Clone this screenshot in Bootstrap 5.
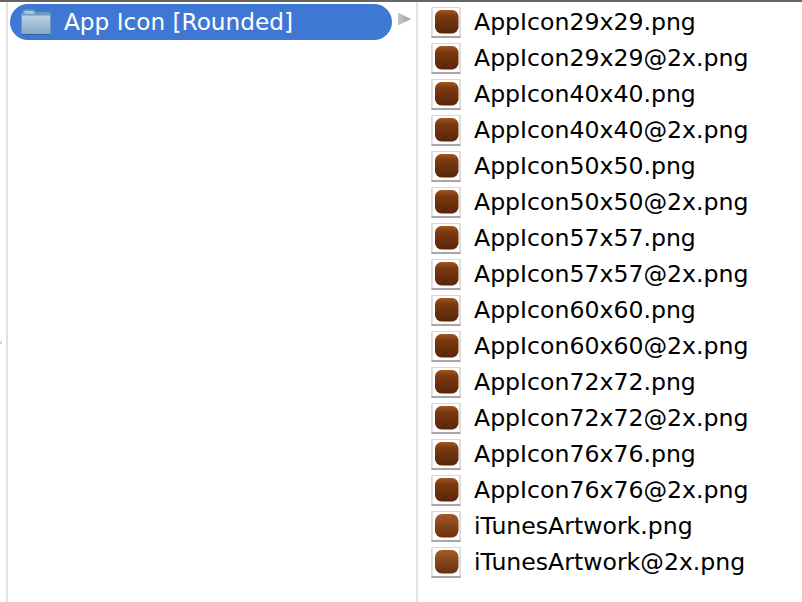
<!DOCTYPE html>
<html lang="en">
<head>
  <meta charset="UTF-8" />
  <title>App Icon [Rounded]</title>
  <link href="https://cdn.jsdelivr.net/npm/bootstrap@5.3.3/dist/css/bootstrap.min.css" rel="stylesheet" />
  <style>
    html, body { height: 100%; overflow: hidden; background: #fff; }
    .finder { height: 602px; border-top: 2px solid #666; font-family: "DejaVu Sans", sans-serif; font-size: 23.6px; line-height: 36px; color: #000; }
    .edge-strip { width: 8px; flex: none; border-right: 2px solid #e3e3e3; position: relative; }
    .edge-tick { position: absolute; left: 0; top: 339px; width: 2px; height: 3px; background: #d8d8d8; }
    .tree-pane { width: 410px; flex: none; border-right: 2px solid #e3e3e3; padding-top: 2px; }
    .folder-row { width: 382px; height: 36px; margin-left: 2px; background: #3f78d4; color: #fff; border-radius: 18px; padding-left: 10px; gap: 12px; font-size: 23.2px; flex: none; }
    .folder-row svg { flex: none; margin-top: 1px; }
    .disclose { width: 13px; height: 14px; margin: 8px 0 0 6px; flex: none; }
    .file-pane { padding: 3px 0 0 13px; }
    .file-row { height: 36px; gap: 12px; white-space: nowrap; }
    .file-row span { margin-top: -2px; }
    .thumb { width: 31px; height: 32px; flex: none; display: block; }
  </style>
</head>
<body>
  <svg width="0" height="0" class="position-absolute">
    <defs>
      <linearGradient id="iconFill" x1="0" y1="0" x2="0" y2="1">
        <stop offset="0" stop-color="#a5531f" />
        <stop offset="0.25" stop-color="#7a3a12" />
        <stop offset="1" stop-color="#5a2506" />
      </linearGradient>
      <linearGradient id="artFill" x1="0" y1="0" x2="0" y2="1">
        <stop offset="0" stop-color="#a45a2a" />
        <stop offset="0.5" stop-color="#85431a" />
        <stop offset="1" stop-color="#6a2f0c" />
      </linearGradient>
      <linearGradient id="folderFill" x1="0" y1="0" x2="0" y2="1">
        <stop offset="0" stop-color="#bcd2e2" />
        <stop offset="1" stop-color="#86aac4" />
      </linearGradient>
      <linearGradient id="arrowFill" x1="0" y1="0" x2="1" y2="0">
        <stop offset="0" stop-color="#c8c8c8" />
        <stop offset="1" stop-color="#9c9c9c" />
      </linearGradient>
      <symbol id="appThumb" viewBox="0 0 31 32">
        <rect x="0" y="0" width="30" height="31" fill="#ececec" />
        <rect x="0.5" y="0.5" width="29" height="30" fill="#c6c6c6" />
        <rect x="0.5" y="29" width="29" height="2" fill="#a8a8a8" />
        <rect x="1.5" y="1" width="27" height="28" fill="#fff" />
        <rect x="4" y="3" width="23.5" height="23.5" rx="6.5" fill="url(#iconFill)" />
      </symbol>
      <symbol id="artThumb" viewBox="0 0 31 32">
        <rect x="0" y="0" width="30" height="31" fill="#ececec" />
        <rect x="0.5" y="0.5" width="29" height="30" fill="#c6c6c6" />
        <rect x="0.5" y="29" width="29" height="2" fill="#a8a8a8" />
        <rect x="1.5" y="1" width="27" height="28" fill="#fff" />
        <rect x="4" y="3" width="23.5" height="23.5" rx="7" fill="url(#artFill)" />
      </symbol>
    </defs>
  </svg>

  <div class="finder d-flex">
    <div class="edge-strip"><div class="edge-tick"></div></div>
    <div class="tree-pane d-flex align-items-start">
      <div class="folder-row d-flex align-items-center">
        <svg width="32" height="27" viewBox="0 0 32 27">
          <path d="M3 2 Q3 0.5 5 0.5 H13 Q15 0.5 16 3 H29 Q31 3 31 5 V24 Q31 26 29 26 H3 Q1 26 1 24 V6 Q1 3 3 3 Z" fill="#6f9abb" />
          <path d="M4 2 H13 L15 5 H5 Z" fill="#a9c4d8" />
          <path d="M2 6.5 H30 V24 Q30 25 29 25 H3 Q2 25 2 24 Z" fill="url(#folderFill)" />
          <path d="M2 25 H30 V25.5 Q30 26 29 26 H3 Q2 26 2 25.5 Z" fill="#345f9e" />
        </svg>
        <span>App Icon [Rounded]</span>
      </div>
      <svg class="disclose" viewBox="0 0 13 14"><path d="M0 0.5 L13 7 L0 13.5 Z" fill="url(#arrowFill)" /></svg>
    </div>
    <div class="file-pane flex-grow-1" id="files"></div>
  </div>

  <script>
    const sizes = ["29x29", "40x40", "50x50", "57x57", "60x60", "72x72", "76x76"];
    const names = [];
    sizes.forEach(s => {
      names.push("AppIcon" + s + ".png");
      names.push("AppIcon" + s + "@2x.png");
    });
    names.push("iTunesArtwork.png", "iTunesArtwork@2x.png");

    const list = document.getElementById("files");
    names.forEach(name => {
      const row = document.createElement("div");
      row.className = "file-row d-flex align-items-center";
      const art = name.startsWith("iTunes") ? "artThumb" : "appThumb";
      row.innerHTML = '<svg class="thumb"><use href="#' + art + '"></use></svg><span>' + name + '</span>';
      list.appendChild(row);
    });
  </script>
</body>
</html>
